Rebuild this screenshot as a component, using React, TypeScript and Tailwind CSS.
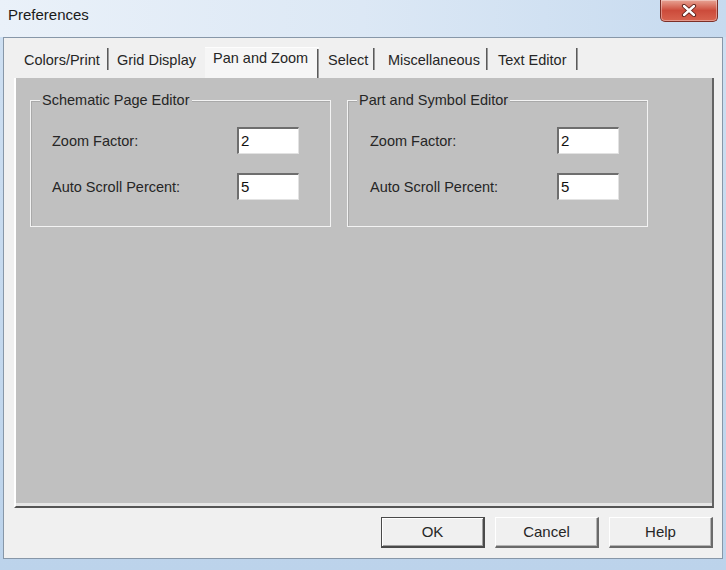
import React from "react";

const font = { fontFamily: '"Liberation Sans", Arial, sans-serif' };

type TabDef = { label: string; w: number; pl: number; sep: boolean; selected?: boolean };

const tabs: TabDef[] = [
  { label: "Colors/Print", w: 93, pl: 8, sep: true },
  { label: "Grid Display", w: 96, pl: 8, sep: false },
  { label: "Pan and Zoom", w: 114, pl: 8, sep: true, selected: true },
  { label: "Select", w: 56, pl: 9, sep: true },
  { label: "Miscellaneous", w: 113, pl: 13, sep: true },
  { label: "Text Editor", w: 90, pl: 10, sep: true },
];

function Tab({ t }: { t: TabDef }) {
  return (
    <div
      className={
        "flex h-[31px] " + (t.selected ? "bg-[#f6f6f6] border-t border-t-[#fdfdfd]" : "")
      }
      style={{ width: t.w }}
    >
      <div
        className={
          "flex-1 whitespace-nowrap text-[14.5px] leading-[18px] text-[#262626] " +
          (t.selected ? "pt-[1px]" : "pt-[4px]")
        }
        style={{ paddingLeft: t.pl }}
      >
        {t.label}
      </div>
      {t.sep && (
        <div
          className={
            "w-[2px] mt-[1px] border-l border-l-[#5a5a5a] border-r border-r-[#9a9a9a] " +
            (t.selected ? "h-[29px]" : "h-[22px]")
          }
        />
      )}
    </div>
  );
}

function Field({ label, value, lp, lw, first }: { label: string; value: string; lp: number; lw: number; first?: boolean }) {
  return (
    <div className={"flex items-center h-[27px] " + (first ? "mt-[18px]" : "mt-[19px]")} style={{ paddingLeft: lp }}>
      <div className="text-[14.5px] leading-[18px] text-[#262626] whitespace-nowrap" style={{ width: lw }}>
        {label}
      </div>
      <div className="w-[62px] h-[27px] bg-white border-t-2 border-l-2 border-t-[#6e6e6e] border-l-[#6e6e6e] border-r border-b border-r-[#e2e2e2] border-b-[#e2e2e2] pl-[2px] text-[15px] leading-[23px] text-[#111]">
        {value}
      </div>
    </div>
  );
}

function Group({ title, lp, lw, className }: { title: string; lp: number; lw: number; className?: string }) {
  return (
    <div
      className={
        "w-[301px] h-[127px] border border-[#f3f3f3] shadow-[inset_1px_1px_0_#a9a9a9] flex flex-col " +
        (className ?? "")
      }
    >
      <div className="-mt-[10px] ml-[9px] px-[2px] w-fit bg-[#c0c0c0] text-[14.5px] leading-[18px] text-[#262626] whitespace-nowrap">
        {title}
      </div>
      <Field label="Zoom Factor:" value="2" lp={lp} lw={lw} first />
      <Field label="Auto Scroll Percent:" value="5" lp={lp} lw={lw} />
    </div>
  );
}

function Btn({ label, def }: { label: string; def?: boolean }) {
  return (
    <div
      className={
        "w-[104px] h-[31px] flex items-center justify-center bg-[#f0f0f0] text-[15px] text-[#262626] " +
        (def
          ? "border border-[#4a4a4a] border-r-2 border-b-2 shadow-[inset_1px_1px_0_#ffffff,inset_-1px_-1px_0_#a0a0a0]"
          : "border-t border-l border-t-white border-l-white border-r-2 border-b-2 border-r-[#6a6a6a] border-b-[#6a6a6a] shadow-[inset_-1px_-1px_0_#b4b4b4]")
      }
    >
      {label}
    </div>
  );
}

export default function App() {
  return (
    <div
      className="w-[726px] h-[570px] flex flex-col bg-gradient-to-b from-[#cfe0f2] to-[#bcd3eb] overflow-hidden"
      style={font}
    >
      {/* title bar */}
      <div className="h-[37px] flex items-start bg-gradient-to-r from-[#eaf1f9] via-[#dce8f5] to-[#c6daef]">
        <div className="pl-[8px] pt-[6px] text-[15px] leading-[18px] text-[#1a1a1a]">Preferences</div>
        <div className="flex-1" />
        <div className="mr-[8px] w-[58px] h-[22px] flex items-center justify-center rounded-b-[5px] border border-t-0 border-[#7c2f27] bg-gradient-to-b from-[#e7a395] via-[#cc4b3b] to-[#d8634f] shadow-[inset_0_0_0_1px_rgba(255,255,255,0.35)]">
          <svg width="16" height="13" viewBox="0 0 16 13">
            <path d="M3 2 L13 11 M13 2 L3 11" stroke="#5a1e17" strokeWidth="4.2" strokeLinecap="round" />
            <path d="M3 2 L13 11 M13 2 L3 11" stroke="#ffffff" strokeWidth="2.4" strokeLinecap="round" />
          </svg>
        </div>
      </div>

      {/* dialog body */}
      <div className="mx-[3px] h-[522px] flex flex-col border border-[#8797a8] bg-[#f0f0f0]">
        <div className="mt-[9px] ml-[12px] flex h-[31px]">
          {tabs.map((t) => (
            <Tab key={t.label} t={t} />
          ))}
        </div>

        <div className="ml-[10px] w-[700px] h-[430px] flex border-l-2 border-l-white border-r-2 border-r-[#646464] border-b-2 border-b-[#555555]">
          <div className="flex-1 bg-[#c0c0c0] border-b-[3px] border-b-[#e6e6e6] flex items-start pl-[14px] pt-[22px]">
            <Group title="Schematic Page Editor" lp={21} lw={185} />
            <Group title="Part and Symbol Editor" lp={22} lw={187} className="ml-[16px]" />
          </div>
        </div>

        <div className="mt-[9px] ml-[377px] flex gap-[10px]">
          <Btn label="OK" def />
          <Btn label="Cancel" />
          <Btn label="Help" />
        </div>
      </div>
    </div>
  );
}
